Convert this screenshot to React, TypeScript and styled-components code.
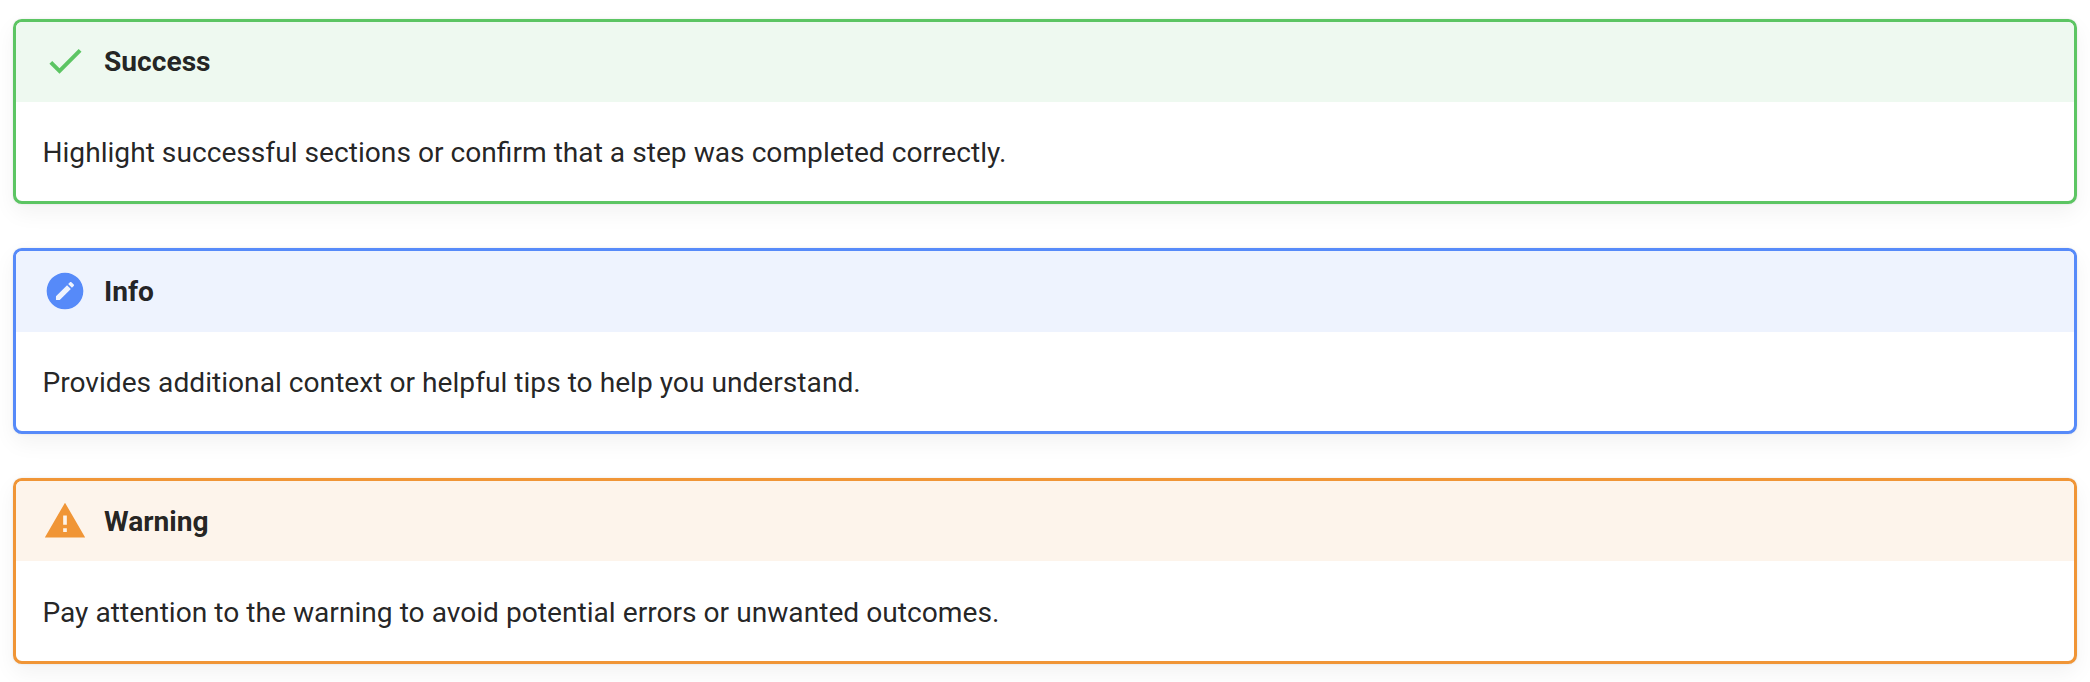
import React from 'react';
import styled, { createGlobalStyle } from 'styled-components';

const GlobalStyle = createGlobalStyle`
  * { box-sizing: border-box; }
  body {
    margin: 0;
    background: #fff;
    color: rgba(0, 0, 0, 0.87);
    font-family: Roboto, "Liberation Sans", sans-serif;
    font-size: 28.16px;
    line-height: 1.6;
    font-kerning: normal;
    -webkit-font-smoothing: antialiased;
  }
`;

const Page = styled.main`
  display: flex;
  flex-direction: column;
  gap: 44px;
  height: 682px;
  padding: 18.5px 13px 0;
  overflow: hidden;
`;

const Admonition = styled.section<{ $color: string }>`
  flex: none;
  border: 3px solid ${(p) => p.$color};
  border-radius: 8.8px;
  background: #fff;
  box-shadow: 0 8.8px 22px rgba(0, 0, 0, 0.05), 0 0 2.2px rgba(0, 0, 0, 0.1);
`;

const Title = styled.header<{ $tint: string }>`
  display: flex;
  align-items: center;
  gap: 17px;
  padding: 17.6px 26.4px 17.6px 27px;
  border-radius: 5.8px 5.8px 0 0;
  background: ${(p) => p.$tint};
  font-weight: 700;
`;

const Icon = styled.svg<{ $color: string }>`
  flex: none;
  width: 44px;
  height: 44px;
  margin: -0.3px 0 0.3px;
  fill: ${(p) => p.$color};
`;

const Message = styled.p`
  margin: 0;
  padding: 28.4px 26.4px 26.1px;
`;

const notes = [
  {
    title: 'Success',
    text: 'Highlight successful sections or confirm that a step was completed correctly.',
    color: '#5cc563',
    tint: '#eef9f0',
    icon: 'M21 7 9 19l-5.5-5.5 1.54-1.54L9 15.92 19.46 5.46z',
  },
  {
    title: 'Info',
    text: 'Provides additional context or helpful tips to help you understand.',
    color: '#568af9',
    tint: '#eef3fe',
    icon: 'M12 2C6.47 2 2 6.47 2 12s4.47 10 10 10 10-4.47 10-10S17.53 2 12 2m3.1 5.07c.14 0 .28.05.4.16l1.27 1.27c.23.22.23.57 0 .78l-1 1-2.05-2.05 1-1c.1-.11.24-.16.38-.16m-1.97 1.74 2.06 2.06-6.06 6.06H7.07v-2.06z',
  },
  {
    title: 'Warning',
    text: 'Pay attention to the warning to avoid potential errors or unwanted outcomes.',
    color: '#f09536',
    tint: '#fdf4eb',
    icon: 'M13 14h-2V9h2m0 9h-2v-2h2M1 21h22L12 2z',
  },
];

export default function App() {
  return (
    <>
      <GlobalStyle />
      <Page>
        {notes.map((note) => (
          <Admonition key={note.title} $color={note.color}>
            <Title $tint={note.tint}>
              <Icon viewBox="0 0 24 24" $color={note.color} aria-hidden="true">
                <path d={note.icon} />
              </Icon>
              {note.title}
            </Title>
            <Message>{note.text}</Message>
          </Admonition>
        ))}
      </Page>
    </>
  );
}
